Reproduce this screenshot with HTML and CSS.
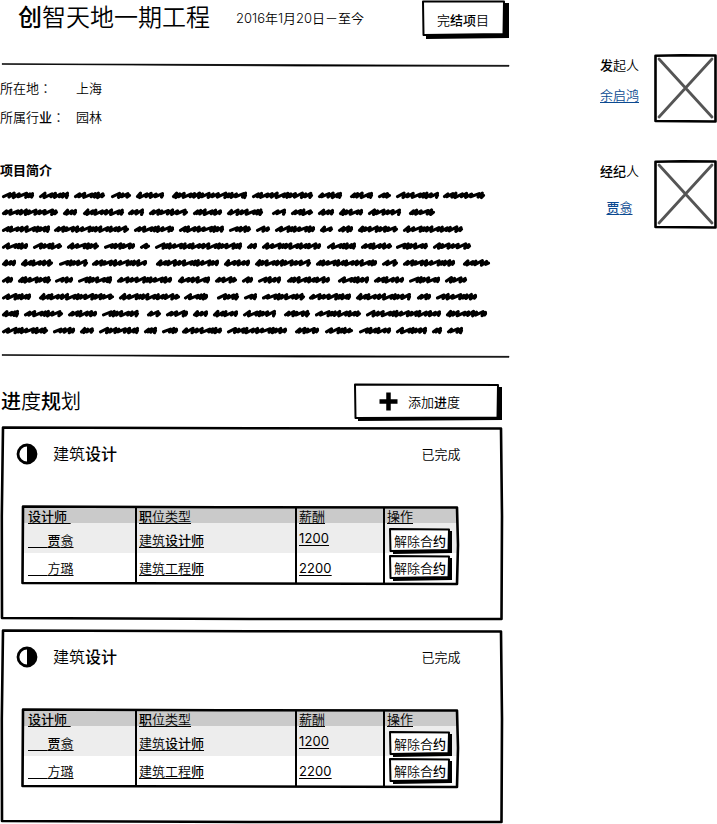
FILE: index.html
```html
<!DOCTYPE html>
<html lang="zh-CN">
<head>
<meta charset="utf-8">
<title>创智天地一期工程</title>
<link rel="stylesheet" href="styles.css">
</head>
<body>
<div class="page">
  <main class="main">
    <header class="head">
      <h1><b>创</b>智天地一期工程</h1>
      <span class="date">2016年1月20日－至今</span>
      <button class="btn finish"><svg class="frame" viewBox="0 0 87 39"><path class="shade" d="M4 34H82V3H87V38L4 39Z"/><path class="line" d="M1 1.500L82 1.500L81.500 34L1.500 35Z"/></svg><span>完<b>结项</b>目</span></button>
    </header>
    <svg class="rule" viewBox="0 0 509 4"><path d="M2 .8L509 2.4V3.2L300 3L2 1.2Z"/></svg>
    <dl class="facts">
      <dt>所在地<i lang="zh-TW">：</i></dt><dd>上海</dd>
      <dt>所属行<b>业</b><i lang="zh-TW">：</i></dt><dd>园林</dd>
    </dl>
    <h3>项目简介</h3>
    <svg class="scribble" id="scribble" viewBox="0 0 509 150"></svg>
    <svg class="rule second" viewBox="0 0 509 4"><path d="M2 .8L509 2.4V3.2L300 3L2 1.2Z"/></svg>
    <div class="plan-head">
      <h2><b>进</b>度<b>规</b>划</h2>
      <button class="btn add"><svg class="frame" viewBox="0 0 148 38"><path class="shade" d="M4 34H143V3H148V36L4 37Z"/><path class="line" d="M1 .5L144 1L143.500 33.500L1.500 34Z"/></svg><svg class="plus" viewBox="0 0 19 19"><path d="M9.500 2V17M2 9.500H17"/></svg><span>添加<b>进</b>度</span></button>
    </div>
    <section class="card">
      <svg class="frame" viewBox="0 0 503 194"><path class="line thick" d="M3 1.500L250 2.200L501 2.500L502 90L501.500 193L250 193L2 192L1.800 90Z"/></svg>
      <div class="card-head"><svg class="half" viewBox="0 0 22 22"><circle cx="11" cy="11" r="9"/><path d="M11 2A9 9 0 0 1 11 20Z"/></svg><h4>建筑<b>设计</b></h4><span class="state">已完成</span></div>
      <div class="table">
        <svg class="frame" viewBox="0 0 438 79"><path class="line thick" d="M2 1.500L200 2.200L436 2.500L437 40L436 79L1.500 78Z"/><path class="line" d="M115 2V78M275 2V78M363 2V78"/></svg>
        <div class="row th"><u><b>设计师</b>&nbsp;</u><u><b>职</b>位类型</u><u>薪酬</u><u>操作</u></div>
        <div class="row alt"><u class="name"><b>贾</b>翕</u><u>建筑<b>设计师</b></u><u class="num">1200</u><button class="btn small"><svg class="frame" viewBox="0 0 63 27"><path class="shade" d="M4 22H59V3H63V25L4 26Z"/><path class="line" d="M1 1L60 1.500L59.500 22L1.500 23Z"/></svg><span>解除合<b>约</b></span></button></div>
        <div class="row"><u class="name">方璐</u><u>建筑工程<b>师</b></u><u class="num">2200</u><button class="btn small"><svg class="frame" viewBox="0 0 63 27"><path class="shade" d="M4 22H59V3H63V25L4 26Z"/><path class="line" d="M1 1L60 1.500L59.500 22L1.500 23Z"/></svg><span>解除合<b>约</b></span></button></div>
      </div>
    </section>
    <section class="card">
      <svg class="frame" viewBox="0 0 503 194"><path class="line thick" d="M3 1.500L250 2.200L501 2.500L502 90L501.500 193L250 193L2 192L1.800 90Z"/></svg>
      <div class="card-head"><svg class="half" viewBox="0 0 22 22"><circle cx="11" cy="11" r="9"/><path d="M11 2A9 9 0 0 1 11 20Z"/></svg><h4>建筑<b>设计</b></h4><span class="state">已完成</span></div>
      <div class="table">
        <svg class="frame" viewBox="0 0 438 79"><path class="line thick" d="M2 1.500L200 2.200L436 2.500L437 40L436 79L1.500 78Z"/><path class="line" d="M115 2V78M275 2V78M363 2V78"/></svg>
        <div class="row th"><u><b>设计师</b>&nbsp;</u><u><b>职</b>位类型</u><u>薪酬</u><u>操作</u></div>
        <div class="row alt"><u class="name"><b>贾</b>翕</u><u>建筑<b>设计师</b></u><u class="num">1200</u><button class="btn small"><svg class="frame" viewBox="0 0 63 27"><path class="shade" d="M4 22H59V3H63V25L4 26Z"/><path class="line" d="M1 1L60 1.500L59.500 22L1.500 23Z"/></svg><span>解除合<b>约</b></span></button></div>
        <div class="row"><u class="name">方璐</u><u>建筑工程<b>师</b></u><u class="num">2200</u><button class="btn small"><svg class="frame" viewBox="0 0 63 27"><path class="shade" d="M4 22H59V3H63V25L4 26Z"/><path class="line" d="M1 1L60 1.500L59.500 22L1.500 23Z"/></svg><span>解除合<b>约</b></span></button></div>
      </div>
    </section>
  </main>
  <aside class="side">
    <div class="person">
      <div class="who"><span><b>发</b>起人</span><a href="#">余启鸿</a></div>
      <svg class="photo" viewBox="0 0 63 69"><path class="cross" d="M5 5L58 63M58 5L5 63"/><path class="line thick" d="M1.500 1.800L28 1.300L61.500 1.500V67.500L1.500 67Z"/></svg>
    </div>
    <div class="person">
      <div class="who wide"><span><b>经纪</b>人</span><a href="#"><b>贾</b>翕</a></div>
      <svg class="photo" viewBox="0 0 63 69"><path class="cross" d="M5 5L58 63M58 5L5 63"/><path class="line thick" d="M1.500 1.800L28 1.300L61.500 1.500V67.500L1.500 67Z"/></svg>
    </div>
  </aside>
</div>
<script src="scribble.js"></script>
</body>
</html>
```
FILE: scribble.js
```js
// Start and end of every scribbled word, one list per line.
const lines = [
  [2,34,39,69,74,105,111,131,136,164,172,247,252,313,318,342,350,373,378,391,396,439,443,485],
  [2,58,63,77,83,124,128,144,149,188,193,222,227,263,272,286,291,313,318,334,339,363,368,401,409,435],
  [2,50,54,129,134,174,179,224,229,251,256,270,275,315,320,333,338,353,358,398,403,463],
  [2,28,33,62,67,99,104,135,140,150,155,242,247,257,262,321,327,356,361,392,396,428,433,471],
  [2,16,21,53,59,88,92,147,156,219,224,250,255,311,316,377,382,398,403,455,463,490],
  [2,13,18,51,55,73,78,112,117,172,178,210,215,237,242,253,258,281,287,330,338,369,374,404,409,440,445,467],
  [2,31,39,114,119,180,184,208,217,239,244,257,262,305,309,351,356,411,417,431,436,477],
  [2,19,24,63,68,97,102,139,147,161,166,188,193,208,213,238,243,276,284,310,315,361,366,441,446,487],
  [2,48,53,75,80,94,99,139,144,157,162,178,182,222,227,287,295,319,325,353,359,391,396,427,432,442,447,463]
];
const steps = [6.5, 4.2, 5, 7.5, 3.2, 3, 4.5, 7, 3.4, 5, 3];
const heights = [1.8, 2.3, 1.5, 2.1, 1.4];
let d = "";
let n = 0;
lines.forEach((words, row) => {
  const y = 8.4 + row * 16.9;
  for (let i = 0; i < words.length; i += 2) {
    let x = words[i] + 1.5;
    const end = words[i + 1] - 1.5;
    d += `M${x} ${y + 1.2}`;
    while (x < end - 2) {
      const s = Math.min(steps[n % steps.length], end - x);
      const h = heights[n++ % heights.length];
      d += `L${(x + s).toFixed(1)} ${(y - h).toFixed(1)}L${(x + s - 1).toFixed(1)} ${(y + h - 0.1).toFixed(1)}`;
      x += s;
    }
    d += `L${end} ${y}`;
  }
});
const path = document.createElementNS("http://www.w3.org/2000/svg", "path");
path.setAttribute("d", d);
document.getElementById("scribble").append(path);
```
FILE: styles.css
```css
* { box-sizing: border-box; margin: 0; padding: 0; }
body {
  background: #fff;
  color: #000;
  font: 13px/20px Inter, "Noto Sans CJK SC", sans-serif;
  font-weight: 350;
}
svg { display: block; overflow: visible; }
b { font-weight: 500; }
i { font-style: normal; font-family: "Noto Sans CJK TC", sans-serif; }
.page { display: flex; width: 717px; height: 824px; overflow: hidden; }
.main { width: 509px; flex: none; }
.head { display: flex; height: 64px; padding-left: 18px; }
h1 { width: 218px; font-size: 24px; line-height: 36px; font-weight: 350; white-space: nowrap; }
.date { width: 185px; padding-top: 8px; white-space: nowrap; }
.btn {
  position: relative;
  display: flex;
  border: 0;
  background: transparent;
  color: inherit;
  font: inherit;
  white-space: nowrap;
}
.btn span, .plus { position: relative; }
.frame { position: absolute; top: 0; left: 0; width: 100%; height: 100%; }
.line { fill: none; stroke: #000; stroke-width: 2; stroke-linejoin: round; }
.thick { stroke-width: 2.6; }
.btn .line { fill: #fff; }
.finish { width: 87px; height: 39px; padding: 10px 0 0 15px; margin-left: 1px; }
.rule { width: 509px; height: 4px; margin-top: -1px; stroke: #000; stroke-width: .8; }
.facts { display: grid; grid-template-columns: 76px 1fr; grid-auto-rows: 29px; margin-top: 11px; }
h3 { margin-top: 24px; font-size: 13px; line-height: 20px; font-weight: 700; }
.scribble { width: 509px; height: 150px; margin-top: 7px; }
.scribble path { fill: none; stroke: #000; stroke-width: 3.1; stroke-linejoin: round; stroke-linecap: round; }
.second { margin-top: 17px; }
.plan-head { display: flex; height: 68px; padding-top: 26px; }
h2 { width: 354px; padding-left: 1px; font-size: 20px; line-height: 36px; font-weight: 350; }
.add { width: 148px; height: 38px; padding: 8px 0 0 25px; gap: 10px; }
.plus { width: 19px; height: 19px; fill: none; stroke: #000; stroke-width: 5; stroke-linecap: square; stroke-linejoin: round; }
.plus path { transform: scale(.9); transform-origin: center; }
.card { position: relative; width: 503px; height: 194px; margin-bottom: 9px; padding: 17px 0 0 16px; }
.card-head { display: flex; height: 62px; }
.half { width: 22px; height: 22px; stroke: #000; stroke-width: 2.8; fill: #fff; }
.half path { fill: #000; stroke: none; }
h4 { width: 384px; padding-left: 15px; font-size: 16px; line-height: 22px; font-weight: 350; }
.state { padding-top: 1px; margin-left: -.5px; }
.table { position: relative; width: 438px; height: 79px; margin-left: 5px; padding: 2px 2px 0 1px; }
.row { display: grid; grid-template-columns: 111px 160px 88px 1fr; height: 30px; line-height: 31px; padding-left: 6px; }
.row u { justify-self: start; text-decoration: underline; text-decoration-thickness: 1px; text-underline-offset: 2px; position: relative; white-space: pre; }
.row.th { height: 16px; line-height: 18px; background: #cacaca; }
.row.alt { background: #ededed; line-height: 34px; }
.row .num { font-weight: 400; letter-spacing: .1px; line-height: 30px; }
.name::before { content: "     "; letter-spacing: .25px; }
.small { width: 63px; height: 27px; padding: 2px 0 0 5px; margin: 5px 0 0 2px; line-height: 22px; }
.row:last-child .small { margin-top: 2px; }
.side { padding: 54px 0 0 82px; }
.person { display: flex; height: 106px; }
.who { display: flex; flex-direction: column; align-items: center; width: 57px; margin-right: 6px; padding-top: 1px; gap: 10px; }
.who.wide { gap: 16px; }
.who a { color: #0b4a91; text-underline-offset: 2px; }
.photo { width: 63px; height: 69px; flex: none; }
.cross { fill: none; stroke: #555; stroke-width: 2.8; stroke-linecap: round; }
```
